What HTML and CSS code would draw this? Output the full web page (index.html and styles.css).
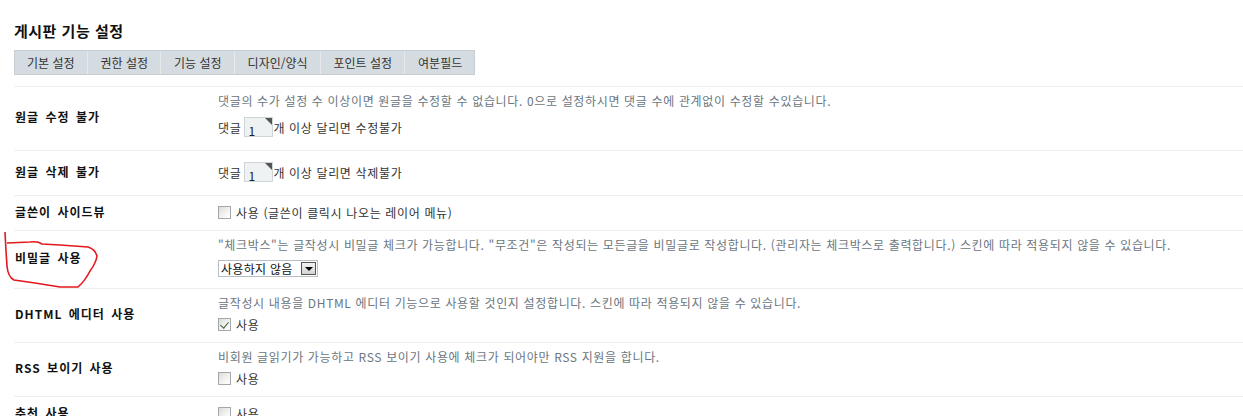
FILE: index.html
```html
<!DOCTYPE html>
<html lang="ko">
<head>
<meta charset="utf-8">
<title>게시판 기능 설정</title>
<link rel="stylesheet" href="styles.css">
</head>
<body>
<div class="page">
  <h1 class="title">게시판 기능 설정</h1>
  <ul class="tabs">
    <li class="tab">기본 설정</li>
    <li class="tab">권한 설정</li>
    <li class="tab">기능 설정</li>
    <li class="tab">디자인/양식</li>
    <li class="tab">포인트 설정</li>
    <li class="tab">여분필드</li>
  </ul>

  <div class="rows">
    <div class="row">
      <div class="label">원글 수정 불가</div>
      <div class="value">
        <p class="desc">댓글의 수가 설정 수 이상이면 원글을 수정할 수 없습니다. 0으로 설정하시면 댓글 수에 관계없이 수정할 수있습니다.</p>
        <div class="ctrl ctrl-input">댓글 <span class="num">1</span>개 이상 달리면 수정불가</div>
      </div>
    </div>
    <div class="row">
      <div class="label">원글 삭제 불가</div>
      <div class="value">
        <div class="ctrl ctrl-input">댓글 <span class="num">1</span>개 이상 달리면 삭제불가</div>
      </div>
    </div>
    <div class="row">
      <div class="label">글쓴이 사이드뷰</div>
      <div class="value">
        <div class="ctrl"><span class="cb"></span>사용 (글쓴이 클릭시 나오는 레이어 메뉴)</div>
      </div>
    </div>
    <div class="row row-marked">
      <div class="label">비밀글 사용</div>
      <div class="value">
        <p class="desc">"체크박스"는 글작성시 비밀글 체크가 가능합니다. "무조건"은 작성되는 모든글을 비밀글로 작성합니다. (관리자는 체크박스로 출력합니다.) 스킨에 따라 적용되지 않을 수 있습니다.</p>
        <div class="ctrl ctrl-select"><span class="select"><span class="select-text">사용하지 않음</span><span class="select-btn"></span></span></div>
      </div>
      <svg class="mark" width="110" height="66" viewBox="0 0 110 66" aria-hidden="true">
        <path d="M5,1 L6,20 L7,35 Q8,46 14,49 L35,52 L60,56 L78,56 Q85,50 90,40 Q96,32 97,25 Q95,18 88,16 L60,14 L42,13 Q38,10 30,11 L7,12" fill="none" stroke="#e3171c" stroke-width="1.6" stroke-linejoin="round"/>
      </svg>
    </div>
    <div class="row">
      <div class="label">DHTML 에디터 사용</div>
      <div class="value">
        <p class="desc">글작성시 내용을 DHTML 에디터 기능으로 사용할 것인지 설정합니다. 스킨에 따라 적용되지 않을 수 있습니다.</p>
        <div class="ctrl"><span class="cb checked"></span>사용</div>
      </div>
    </div>
    <div class="row">
      <div class="label">RSS 보이기 사용</div>
      <div class="value">
        <p class="desc">비회원 글읽기가 가능하고 RSS 보이기 사용에 체크가 되어야만 RSS 지원을 합니다.</p>
        <div class="ctrl"><span class="cb"></span>사용</div>
      </div>
    </div>
    <div class="row">
      <div class="label">추천 사용</div>
      <div class="value">
        <div class="ctrl"><span class="cb"></span>사용</div>
      </div>
    </div>
  </div>
</div>
</body>
</html>
```

FILE: styles.css
```css
* { box-sizing: border-box; }
html, body { margin: 0; padding: 0; background: #fff; }
body {
  font-family: "Noto Sans CJK KR", "Noto Sans", sans-serif;
  font-size: 12px;
  color: #222;
  overflow: hidden;
}
.page { padding: 21px 0 0 14px; }
.title {
  margin: 0 0 9px;
  font-size: 15px;
  line-height: 20px;
  font-weight: bold;
  letter-spacing: 0.5px;
  color: #111;
}
.tabs {
  display: flex;
  width: max-content;
  margin: 0;
  padding: 0;
  list-style: none;
  background: #d5dce1;
  border: 1px solid #c7ced3;
}
.tab {
  height: 23px;
  line-height: 23px;
  padding: 0 12px 0 13px;
  color: #333;
  border-left: 1px solid #e6eaed;
}
.tab:first-child { border-left: 0; padding-left: 12px; }
.rows { margin-top: 11px; }
.row {
  position: relative;
  display: grid;
  grid-template-columns: 204px 1fr;
  border-top: 1px solid #eeeeee;
}
.label {
  align-self: center;
  padding: 0 0 4px 1px;
  font-weight: bold;
  letter-spacing: 1px;
  word-spacing: 2px;
  color: #111;
}
.value { padding: 6px 0 8px; letter-spacing: 0.65px; }
.desc {
  margin: 0 0 3px;
  line-height: 16px;
  color: #6b7680;
}
.ctrl {
  display: flex;
  align-items: center;
  height: 20px;
  color: #333;
}
.ctrl-input { height: 30px; }
.ctrl-select { height: 24px; }
.num {
  position: relative;
  display: inline-block;
  width: 29px;
  height: 20px;
  margin: 0 0 0 3px;
  padding: 5px 0 0 3px;
  line-height: 15px;
  letter-spacing: 0;
  background: #eef2f3;
  border: 1px solid #cfd6da;
  color: #222;
}
.num::after {
  content: "";
  position: absolute;
  top: 0;
  right: 0;
  border-top: 7px solid #555;
  border-left: 7px solid transparent;
}
.cb {
  position: relative;
  display: inline-block;
  width: 13px;
  height: 13px;
  margin-right: 5px;
  border: 1px solid #a3a8ac;
  background: linear-gradient(135deg, #dcdcd6 0%, #f4f4f2 60%, #ffffff 100%);
}
.cb.checked::after {
  content: "";
  position: absolute;
  left: 3px;
  top: 1px;
  width: 4px;
  height: 7px;
  border-right: 1.5px solid #3d5a3d;
  border-bottom: 1.5px solid #3d5a3d;
  transform: rotate(40deg);
}
.select {
  display: inline-flex;
  align-items: center;
  width: 100px;
  height: 17px;
  border: 1px solid #b8bfc4;
  background: #fff;
  padding: 0 1px 0 2px;
  letter-spacing: 0.3px;
}
.select-text { flex: 1; color: #111; line-height: 15px; }
.select-btn {
  position: relative;
  width: 15px;
  height: 13px;
  background: linear-gradient(#f2f2f2, #d4d4d4);
  border: 1px solid #555;
}
.select-btn::after {
  content: "";
  position: absolute;
  left: 3px;
  top: 4px;
  border-top: 4px solid #000;
  border-left: 4px solid transparent;
  border-right: 4px solid transparent;
}
.mark {
  position: absolute;
  left: -14px;
  top: 0;
  pointer-events: none;
}
```
